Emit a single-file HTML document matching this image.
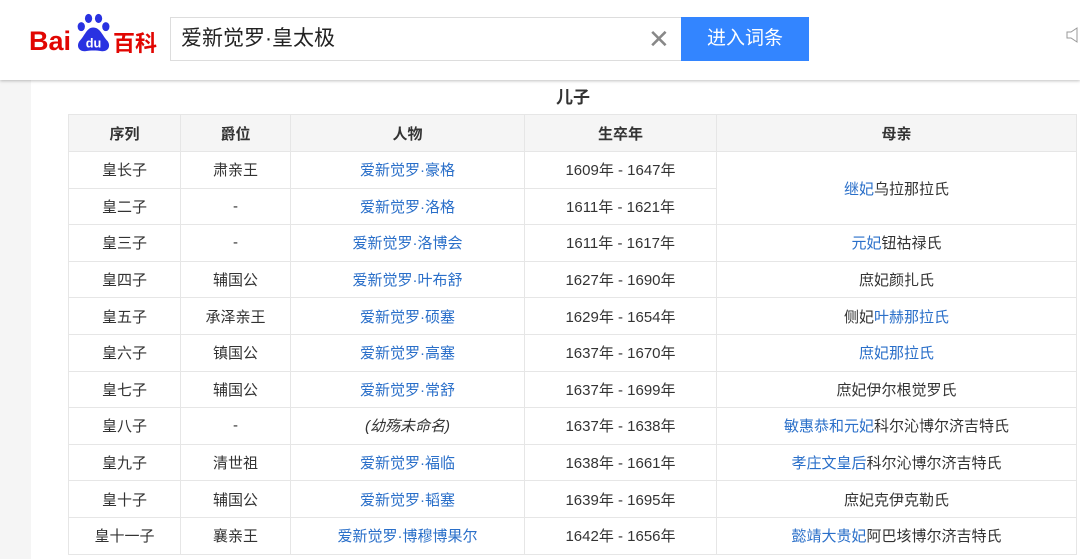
<!DOCTYPE html>
<html><head><meta charset="utf-8"><style>
*{margin:0;padding:0;box-sizing:border-box}
body{width:1080px;height:559px;overflow:hidden;background:#f5f5f5;font-family:"Liberation Sans","Noto Sans CJK SC",sans-serif;color:#333;position:relative}
.hdr{position:absolute;left:0;top:0;width:1080px;height:80px;background:#fff;box-shadow:0 1px 3px rgba(0,0,0,.25);z-index:2}
.logo{position:absolute;left:29px;top:14px;height:40px;width:140px}
.b1{position:absolute;top:12px;font:bold 27px "Liberation Sans",sans-serif;color:#e10602;white-space:nowrap;line-height:30px}
.search{position:absolute;left:170px;top:17px;width:512px;height:44px;border:1px solid #ddd;background:#fff;font-size:21px;line-height:42px;padding-left:10px;color:#222}
.x{position:absolute;left:648px;top:26px;font-size:26px;color:#888;line-height:26px}
.btn{position:absolute;left:681px;top:17px;width:128px;height:44px;background:#3385ff;color:#fff;font-size:19px;text-align:center;line-height:44px}
.main{position:absolute;left:31px;top:80px;width:1049px;height:479px;background:#fff}
h3{position:absolute;left:0;width:1080px;top:83px;text-align:center;font-size:17px;font-weight:bold;color:#333;padding-left:66px}
table{position:absolute;left:68px;top:114px;width:1009px;border-collapse:collapse;table-layout:fixed;font-size:15px}
td,th{border:1px solid #e6e6e6;text-align:center;height:36.6px;padding:0}
th{background:#f5f5f5;font-weight:bold;height:37px}
a{color:#2a6fc9;text-decoration:none}
i{font-style:italic}
</style></head><body>
<div class="hdr">
<div class="logo">
<span class="b1" style="left:0">Bai</span>
<svg style="position:absolute;left:45px;top:-2px" width="40" height="42" viewBox="0 0 44 42">
<ellipse cx="8" cy="14" rx="4" ry="5" fill="#2932e1"/><ellipse cx="16" cy="5" rx="4" ry="5" fill="#2932e1"/><ellipse cx="27" cy="5" rx="4" ry="5" fill="#2932e1"/><ellipse cx="35" cy="14" rx="4" ry="5" fill="#2932e1"/>
<path d="M21 15 C14 15 12 24 6 30 C2 36 6 42 13 41 C18 40 25 40 30 41 C37 42 41 36 37 30 C31 24 29 15 21 15Z" fill="#2932e1"/>
<text x="21.5" y="37" font-family="Liberation Sans" font-size="14" fill="#fff" text-anchor="middle" font-weight="bold">du</text>
</svg>
<span class="b1" style="left:84px;font-family:'Noto Sans CJK SC',sans-serif;font-size:22px;top:13px">百科</span>
</div>
<div class="search">爱新觉罗·皇太极</div>
<div class="x">✕</div>
<div class="btn">进入词条</div>
<svg style="position:absolute;left:1066px;top:27px" width="14" height="16"><path d="M1 5h4l6-4v14l-6-4H1z" fill="none" stroke="#999"/></svg>
</div>
<div class="main"></div>
<h3>儿子</h3>
<table>
<colgroup><col style="width:112px"><col style="width:110px"><col style="width:234px"><col style="width:192px"><col></colgroup>
<tr><th>序列</th><th>爵位</th><th>人物</th><th>生卒年</th><th>母亲</th></tr>
<tr><td>皇长子</td><td>肃亲王</td><td><a>爱新觉罗·豪格</a></td><td>1609年 - 1647年</td><td rowspan="2"><a>继妃</a>乌拉那拉氏</td></tr>
<tr><td>皇二子</td><td>-</td><td><a>爱新觉罗·洛格</a></td><td>1611年 - 1621年</td></tr>
<tr><td>皇三子</td><td>-</td><td><a>爱新觉罗·洛博会</a></td><td>1611年 - 1617年</td><td><a>元妃</a>钮祜禄氏</td></tr>
<tr><td>皇四子</td><td>辅国公</td><td><a>爱新觉罗·叶布舒</a></td><td>1627年 - 1690年</td><td>庶妃颜扎氏</td></tr>
<tr><td>皇五子</td><td>承泽亲王</td><td><a>爱新觉罗·硕塞</a></td><td>1629年 - 1654年</td><td>侧妃<a>叶赫那拉氏</a></td></tr>
<tr><td>皇六子</td><td>镇国公</td><td><a>爱新觉罗·高塞</a></td><td>1637年 - 1670年</td><td><a>庶妃那拉氏</a></td></tr>
<tr><td>皇七子</td><td>辅国公</td><td><a>爱新觉罗·常舒</a></td><td>1637年 - 1699年</td><td>庶妃伊尔根觉罗氏</td></tr>
<tr><td>皇八子</td><td>-</td><td><i>(幼殇未命名)</i></td><td>1637年 - 1638年</td><td><a>敏惠恭和元妃</a>科尔沁博尔济吉特氏</td></tr>
<tr><td>皇九子</td><td>清世祖</td><td><a>爱新觉罗·福临</a></td><td>1638年 - 1661年</td><td><a>孝庄文皇后</a>科尔沁博尔济吉特氏</td></tr>
<tr><td>皇十子</td><td>辅国公</td><td><a>爱新觉罗·韬塞</a></td><td>1639年 - 1695年</td><td>庶妃克伊克勒氏</td></tr>
<tr><td>皇十一子</td><td>襄亲王</td><td><a>爱新觉罗·博穆博果尔</a></td><td>1642年 - 1656年</td><td><a>懿靖大贵妃</a>阿巴垓博尔济吉特氏</td></tr>
</table>
</body></html>
